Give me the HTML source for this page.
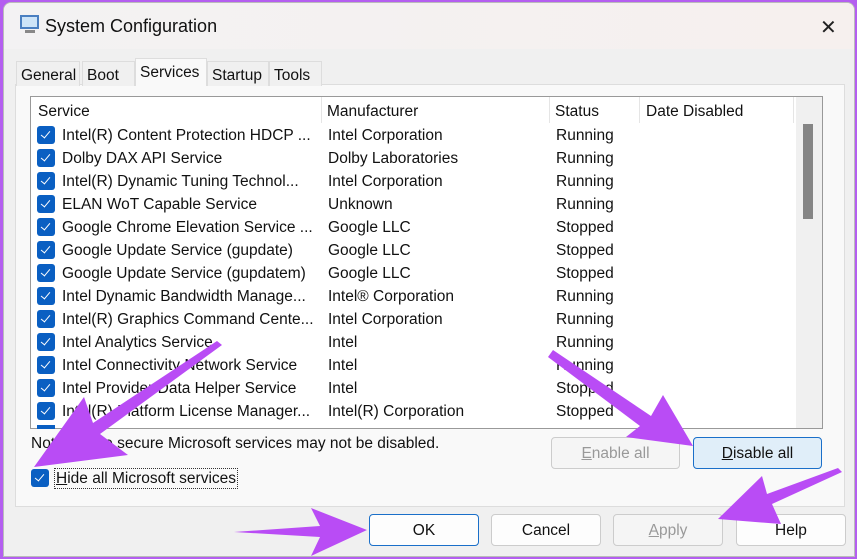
<!DOCTYPE html>
<html><head><meta charset="utf-8"><style>
*{margin:0;padding:0;box-sizing:border-box}
body{width:857px;height:559px;overflow:hidden;background:#b45ef0;font-family:"Liberation Sans",sans-serif;position:relative}
.win{position:absolute;left:3px;top:2px;width:852px;height:555px;background:#f0f0f0;border-radius:8px 8px 0 0;border:1px solid #bbb;overflow:hidden}
.title{position:absolute;left:0;top:0;width:100%;height:46px;background:linear-gradient(90deg,#f3f2f3,#f6f0ee);}
.ttext{position:absolute;left:41px;top:13px;font-size:18px;color:#111}
.close{position:absolute;left:816px;top:12px;font-size:20px;color:#222;font-weight:300}
.abs{position:absolute}
.tab{position:absolute;top:58px;height:25px;font-size:15.5px;color:#111;border:1px solid #ddd;border-bottom:none;background:#f0f0f0;padding:5px 3px 0 4px}
.panel{position:absolute;left:11px;top:81px;width:830px;height:423px;background:#f9f9f9;border:1px solid #ddd}
.list{position:absolute;left:30px;top:96px;width:793px;height:333px;background:#fff;border:1px solid #999;overflow:hidden}
.row{position:absolute;left:0;height:23px;font-size:15.5px;color:#111;white-space:nowrap}
.cb{position:absolute;width:18px;height:18px;background:#0a5fc2;border-radius:3px}
.cb:after{content:"";position:absolute;left:6px;top:3px;width:4px;height:8px;border:solid #fff;border-width:0 1.5px 1.5px 0;transform:rotate(40deg)}
.hdr{position:absolute;top:6px;font-size:15.5px;color:#111}
.sep{position:absolute;top:0;width:1px;height:26px;background:#e5e5e5}
.btn{position:absolute;height:32px;border:1px solid #ccc;border-radius:4px;background:#fdfdfd;font-size:15.5px;text-align:center;line-height:31px;color:#111}
</style></head><body>
<div class="win">
<div class="title">
<svg class="abs" style="left:15px;top:10px" width="22" height="22" viewBox="0 0 22 22"><rect x="1" y="2" width="19" height="14" fill="#4a7fc1"/><rect x="3" y="4" width="15" height="10" fill="#cde4f8"/><rect x="6" y="17" width="10" height="3" fill="#888"/></svg>
<div class="ttext">System Configuration</div>
<div class="close">✕</div>
</div>
<div class="panel"></div>
<div class="tab" style="left:12px;width:64px">General</div>
<div class="tab" style="left:78px;width:53px">Boot</div>
<div class="tab" style="left:131px;top:55px;height:28px;width:72px;background:#f9f9f9;border-color:#ddd">Services</div>
<div class="tab" style="left:203px;width:62px">Startup</div>
<div class="tab" style="left:265px;width:53px">Tools</div>
</div>
<div class="list">
<div class="hdr" style="left:7px">Service</div><div class="sep" style="left:290px"></div>
<div class="hdr" style="left:296px">Manufacturer</div><div class="sep" style="left:518px"></div>
<div class="hdr" style="left:524px">Status</div><div class="sep" style="left:608px"></div>
<div class="hdr" style="left:615px">Date Disabled</div><div class="sep" style="left:762px"></div>
<div class="abs" style="left:765px;top:0;width:27px;height:333px;background:#f0f0f0"></div>
<div class="abs" style="left:772px;top:27px;width:10px;height:95px;background:#858585"></div>
</div>
<div id="rows"></div>
<script>
const d=[["Intel(R) Content Protection HDCP ...","Intel Corporation","Running"],["Dolby DAX API Service","Dolby Laboratories","Running"],["Intel(R) Dynamic Tuning Technol...","Intel Corporation","Running"],["ELAN WoT Capable Service","Unknown","Running"],["Google Chrome Elevation Service ...","Google LLC","Stopped"],["Google Update Service (gupdate)","Google LLC","Stopped"],["Google Update Service (gupdatem)","Google LLC","Stopped"],["Intel Dynamic Bandwidth Manage...","Intel® Corporation","Running"],["Intel(R) Graphics Command Cente...","Intel Corporation","Running"],["Intel Analytics Service","Intel","Running"],["Intel Connectivity Network Service","Intel","Running"],["Intel Provider Data Helper Service","Intel","Stopped"],["Intel(R) Platform License Manager...","Intel(R) Corporation","Stopped"]];
let h="";d.forEach((r,i)=>{const y=127+i*23;h+=`<div class="cb" style="left:37px;top:${y-1}px"></div><div class="row" style="left:62px;top:${y}px">${r[0]}</div><div class="row" style="left:328px;top:${y}px">${r[1]}</div><div class="row" style="left:556px;top:${y}px">${r[2]}</div>`});
h+=`<div class="abs" style="left:37px;top:425px;width:18px;height:4px;background:#0a5fc2"></div>`;
document.getElementById("rows").innerHTML=h;
</script>
<div class="abs" style="left:31px;top:435px;font-size:15.5px;color:#111">Note: Some secure Microsoft services may not be disabled.</div>
<div class="cb" style="left:31px;top:469px"></div>
<div class="abs" style="left:54px;top:468px;font-size:15.5px;color:#111;border:1px dotted #333;padding:1px 1px 0"><u>H</u>ide all Microsoft services</div>
<div class="btn" style="left:551px;top:437px;width:129px;color:#999;background:#f5f5f5"><u>E</u>nable all</div>
<div class="btn" style="left:693px;top:437px;width:129px;background:#e0eef9;border-color:#1a6fc9"><u>D</u>isable all</div>
<div class="btn" style="left:369px;top:514px;width:110px;border-color:#1a6fc9">OK</div>
<div class="btn" style="left:491px;top:514px;width:110px">Cancel</div>
<div class="btn" style="left:613px;top:514px;width:110px;color:#999;background:#f5f5f5"><u>A</u>pply</div>
<div class="btn" style="left:736px;top:514px;width:110px">Help</div>
<svg class="abs" style="left:0;top:0" width="857" height="559">
<g fill="#b94cf5">
<polygon points="222,345 100,434 128,455 34,467 84,397 93,423 217,341"/>
<polygon points="553,350 651,416 663,395 693,446 626,437 640,426 548,357"/>
<polygon points="842,472 772,504 781,524 718,519 762,476 767,494 838,468"/>
<polygon points="234,532 320,526 311,508 367,530 311,556 320,537"/>
</g></svg>
</body></html>
